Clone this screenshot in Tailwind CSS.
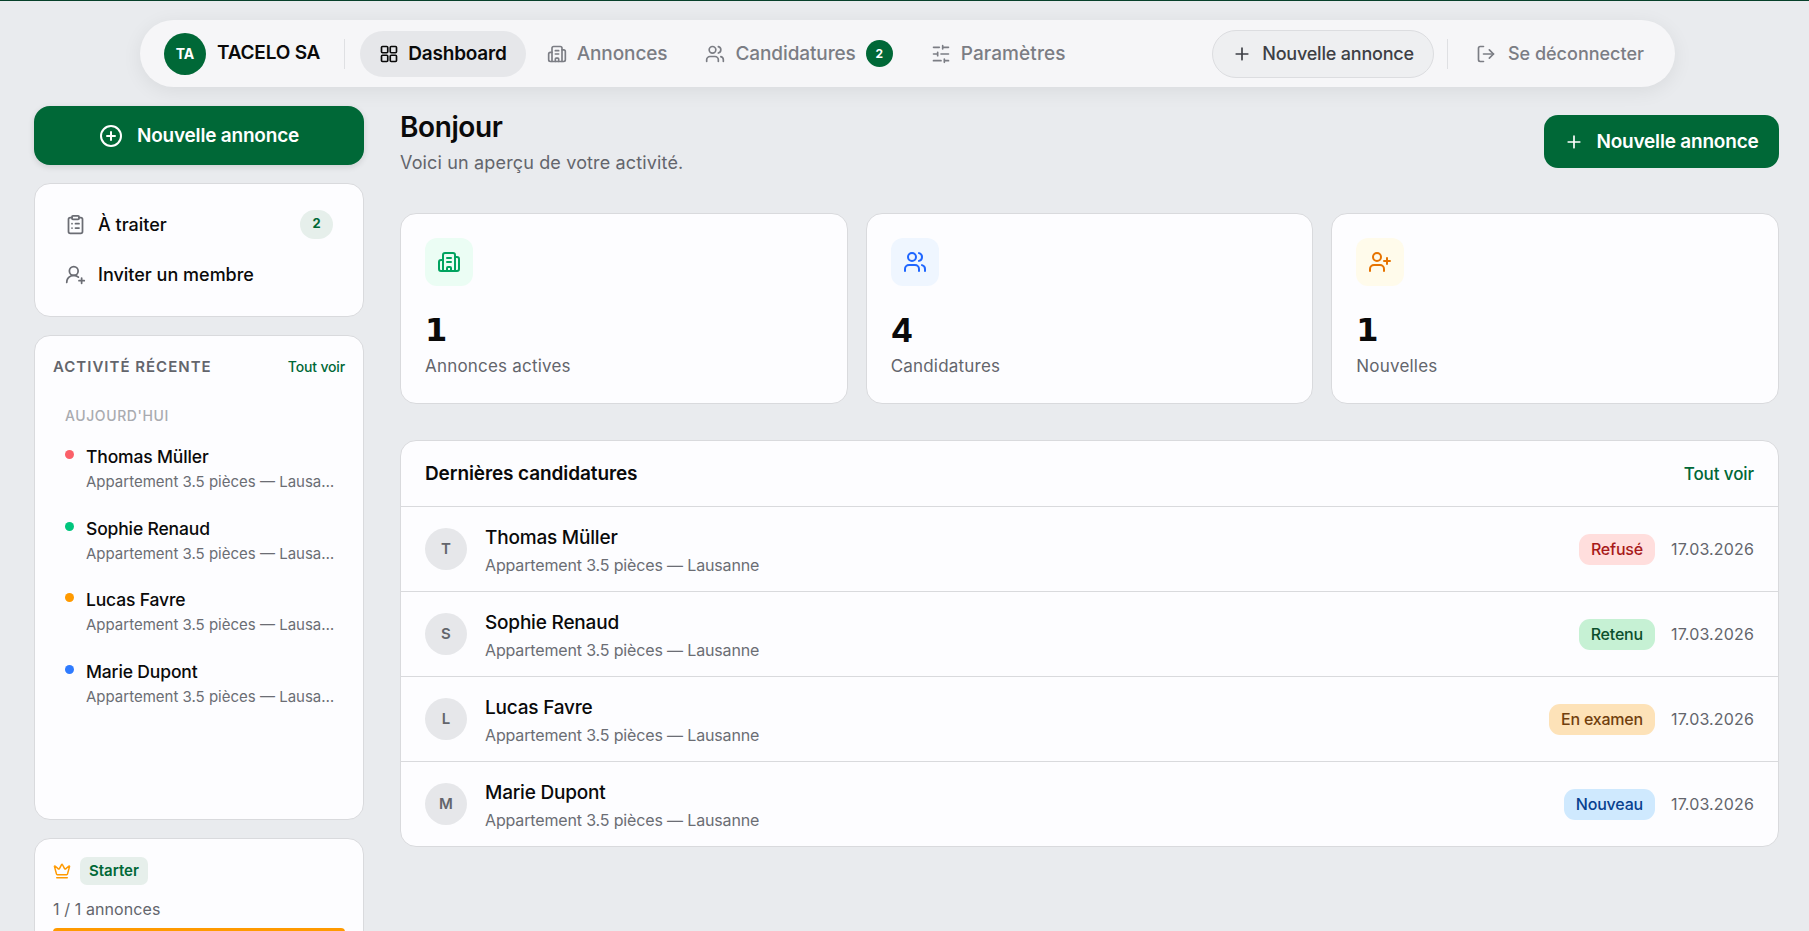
<!DOCTYPE html>
<html lang="fr">
<head>
    <meta charset="UTF-8">
    <meta name="viewport" content="width=device-width, initial-scale=1.0">
    <title>Dashboard</title>
    <script src="https://cdn.jsdelivr.net/npm/@tailwindcss/browser@4"></script>
</head>
<body class="bg-[#e9ebee] font-['Inter',sans-serif] text-[#0a0a0a] h-[931px] overflow-hidden border-t border-[#06402a]">

    <!-- Top nav -->
    <div class="flex justify-center pt-[19px] pl-[6px]">
        <nav class="w-[1535px] h-[67px] flex items-center rounded-[34px] bg-[#f6f6f8] shadow-[0_4px_20px_rgba(0,0,0,0.07)] pl-6 pr-5">
            <div class="w-[42px] h-[42px] rounded-full bg-[#006837] text-white flex items-center justify-center text-[14px] font-bold">TA</div>
            <span class="ml-[11px] text-[19px] font-semibold tracking-[-0.2px] whitespace-nowrap">TACELO SA</span>
            <div class="w-px h-[30px] bg-[#dfe0e3] ml-[24px] mr-[15px]"></div>
            <a class="flex items-center gap-[9px] h-[46px] px-[19px] rounded-[23px] bg-[#e6e7ea] text-[19px] font-semibold tracking-[-0.2px]">
                <svg class="w-5 h-5" viewBox="0 0 24 24" fill="none" stroke="currentColor" stroke-width="2"><rect x="3" y="3" width="7.5" height="7.5" rx="1.2"/><rect x="13.5" y="3" width="7.5" height="7.5" rx="1.2"/><rect x="3" y="13.5" width="7.5" height="7.5" rx="1.2"/><rect x="13.5" y="13.5" width="7.5" height="7.5" rx="1.2"/></svg>
                <span class="pt-[2px]">Dashboard</span>
            </a>
            <a class="flex items-center gap-[10px] ml-[21px] text-[19px] font-medium text-[#7b7d84] tracking-[-0.1px]">
                <svg class="w-5 h-5" viewBox="0 0 24 24" fill="none" stroke="currentColor" stroke-width="2" stroke-linecap="round" stroke-linejoin="round"><path d="M10 12h4M10 8h4"/><path d="M14 21v-3a1 1 0 0 0-1-1h-2a1 1 0 0 0-1 1v3"/><path d="M6 10H4a2 2 0 0 0-2 2v7a2 2 0 0 0 2 2h16a2 2 0 0 0 2-2V9a2 2 0 0 0-2-2h-2"/><path d="M6 21V5a2 2 0 0 1 2-2h8a2 2 0 0 1 2 2v16"/></svg>
                <span class="pt-[2px]">Annonces</span>
            </a>
            <a class="flex items-center gap-[10px] ml-[38px] text-[19px] font-medium text-[#7b7d84] tracking-[-0.1px]">
                <svg class="w-5 h-5" viewBox="0 0 24 24" fill="none" stroke="currentColor" stroke-width="2" stroke-linecap="round" stroke-linejoin="round"><path d="M16 21v-2a4 4 0 0 0-4-4H6a4 4 0 0 0-4 4v2"/><circle cx="9" cy="7" r="4"/><path d="M22 21v-2a4 4 0 0 0-3-3.87"/><path d="M16 3.13a4 4 0 0 1 0 7.75"/></svg>
                <span class="pt-[2px]">Candidatures</span>
                <span class="w-[27px] h-[27px] rounded-full bg-[#006837] text-white text-[12px] font-bold flex items-center justify-center">2</span>
            </a>
            <a class="flex items-center gap-[10px] ml-[38px] text-[19px] font-medium text-[#7b7d84] tracking-[0.1px]">
                <svg class="w-5 h-5" viewBox="0 0 24 24" fill="none" stroke="currentColor" stroke-width="2" stroke-linecap="round" stroke-linejoin="round"><path d="M21 4h-7M10 4H3M21 12h-9M8 12H3M21 20h-5M12 20H3M14 2v4M8 10v4M16 18v4"/></svg>
                <span class="pt-[2px]">Paramètres</span>
            </a>
            <a class="flex items-center gap-[10px] ml-auto h-[48px] px-[19px] rounded-[25px] bg-[#eeeff1] border border-[#dcdde0] text-[18px] font-medium text-[#3d3f45] tracking-[-0.2px]">
                <svg class="w-5 h-5" viewBox="0 0 24 24" fill="none" stroke="currentColor" stroke-width="2" stroke-linecap="round"><path d="M5 12h14M12 5v14"/></svg>
                Nouvelle annonce
            </a>
            <div class="w-px h-[30px] bg-[#dfe0e3] ml-[13px] mr-[28px]"></div>
            <a class="flex items-center gap-[12px] text-[18px] font-medium text-[#7b7d84] mr-[11px]">
                <svg class="w-5 h-5" viewBox="0 0 24 24" fill="none" stroke="currentColor" stroke-width="2" stroke-linecap="round" stroke-linejoin="round"><path d="M9 21H5a2 2 0 0 1-2-2V5a2 2 0 0 1 2-2h4"/><path d="m16 17 5-5-5-5"/><path d="M21 12H9"/></svg>
                Se déconnecter
            </a>
        </nav>
    </div>

    <div class="flex gap-[36px] pl-[34px] pr-[30px] pt-[19px]">

        <!-- Sidebar -->
        <aside class="w-[330px] shrink-0 flex flex-col">
            <button class="h-[59px] rounded-[16px] bg-[#006837] text-white flex items-center justify-center gap-[14px] text-[19px] font-semibold tracking-[-0.2px] shadow-[0_2px_6px_rgba(0,0,0,0.12)]">
                <svg class="w-6 h-6" viewBox="0 0 24 24" fill="none" stroke="currentColor" stroke-width="2" stroke-linecap="round"><circle cx="12" cy="12" r="10"/><path d="M8 12h8M12 8v8"/></svg>
                <span class="pt-[2px]">Nouvelle annonce</span>
            </button>

            <div class="mt-[18px] h-[134px] rounded-[16px] bg-[#fdfdff] border border-[#d9dadd] px-[30px] pt-[25px] flex flex-col gap-[20px]">
                <div class="flex items-center h-[30px]">
                    <svg class="w-[21px] h-[21px] text-[#6b6d74]" viewBox="0 0 24 24" fill="none" stroke="currentColor" stroke-width="2" stroke-linecap="round" stroke-linejoin="round"><rect x="8" y="2" width="8" height="4" rx="1"/><path d="M16 4h2a2 2 0 0 1 2 2v14a2 2 0 0 1-2 2H6a2 2 0 0 1-2-2V6a2 2 0 0 1 2-2h2"/><path d="M12 11h4M12 16h4M8 11h.01M8 16h.01"/></svg>
                    <span class="ml-[12px] text-[18px] font-medium">À traiter</span>
                    <span class="ml-auto w-[33px] h-[29px] rounded-full bg-[#e6efeb] text-[#006837] text-[13px] font-bold flex items-center justify-center">2</span>
                </div>
                <div class="flex items-center h-[30px]">
                    <svg class="w-[21px] h-[21px] text-[#6b6d74]" viewBox="0 0 24 24" fill="none" stroke="currentColor" stroke-width="2" stroke-linecap="round" stroke-linejoin="round"><path d="M2 21a8 8 0 0 1 13.3-6"/><circle cx="10" cy="8" r="5"/><path d="M19 16v6M22 19h-6"/></svg>
                    <span class="ml-[12px] text-[18px] font-medium">Inviter un membre</span>
                </div>
            </div>

            <div class="mt-[18px] h-[485px] rounded-[16px] bg-[#fdfdff] border border-[#d9dadd] px-[18px] pt-[21px]">
                <div class="flex items-center justify-between leading-[20px]">
                    <span class="text-[15px] font-semibold text-[#63656c] tracking-[1px] uppercase">Activité récente</span>
                    <a class="text-[14px] font-medium text-[#006837] tracking-[-0.15px]">Tout voir</a>
                </div>
                <div class="mt-[29px] ml-[12px] text-[14px] leading-[20px] font-medium text-[#a9abb0] tracking-[0.6px] uppercase">Aujourd'hui</div>
                <div class="mt-[21px] flex flex-col gap-[26.6px]">
                    <div class="flex items-start">
                        <span class="w-[9px] h-[9px] rounded-full bg-[#fb6069] ml-[12px] mt-[3px] shrink-0"></span>
                        <div class="ml-[12px] min-w-0 w-[250px]">
                            <div class="text-[17.5px] font-medium leading-[20px] tracking-[-0.15px]">Thomas Müller</div>
                            <div class="text-[15px] text-[#6b6d74] leading-[20px] mt-[5px] truncate">Appartement 3.5 pièces — Lausanne</div>
                        </div>
                    </div>
                    <div class="flex items-start">
                        <span class="w-[9px] h-[9px] rounded-full bg-[#00c57d] ml-[12px] mt-[3px] shrink-0"></span>
                        <div class="ml-[12px] min-w-0 w-[250px]">
                            <div class="text-[17.5px] font-medium leading-[20px] tracking-[-0.15px]">Sophie Renaud</div>
                            <div class="text-[15px] text-[#6b6d74] leading-[20px] mt-[5px] truncate">Appartement 3.5 pièces — Lausanne</div>
                        </div>
                    </div>
                    <div class="flex items-start">
                        <span class="w-[9px] h-[9px] rounded-full bg-[#ff9a00] ml-[12px] mt-[3px] shrink-0"></span>
                        <div class="ml-[12px] min-w-0 w-[250px]">
                            <div class="text-[17.5px] font-medium leading-[20px] tracking-[-0.15px]">Lucas Favre</div>
                            <div class="text-[15px] text-[#6b6d74] leading-[20px] mt-[5px] truncate">Appartement 3.5 pièces — Lausanne</div>
                        </div>
                    </div>
                    <div class="flex items-start">
                        <span class="w-[9px] h-[9px] rounded-full bg-[#2f7bff] ml-[12px] mt-[3px] shrink-0"></span>
                        <div class="ml-[12px] min-w-0 w-[250px]">
                            <div class="text-[17.5px] font-medium leading-[20px] tracking-[-0.15px]">Marie Dupont</div>
                            <div class="text-[15px] text-[#6b6d74] leading-[20px] mt-[5px] truncate">Appartement 3.5 pièces — Lausanne</div>
                        </div>
                    </div>
                </div>
            </div>

            <div class="mt-[18px] h-[140px] rounded-[16px] bg-[#fdfdff] border border-[#d9dadd] px-[18px] pt-[18px]">
                <div class="flex items-center gap-[9px]">
                    <svg class="w-[18px] h-[18px] text-[#ff9a00]" viewBox="0 0 24 24" fill="none" stroke="currentColor" stroke-width="2" stroke-linecap="round" stroke-linejoin="round"><path d="M11.6 3.3a.5.5 0 0 1 .9 0l2.9 5.6a1 1 0 0 0 1.5.3l4.4-3.8a.5.5 0 0 1 .8.5l-2.8 10.3a1 1 0 0 1-1 .7H5.7a1 1 0 0 1-1-.7L1.9 5.9a.5.5 0 0 1 .8-.5l4.4 3.8a1 1 0 0 0 1.5-.3z"/><path d="M5 21h14"/></svg>
                    <span class="h-[28px] px-[9px] rounded-[7px] bg-[#e6efeb] text-[#006837] text-[15px] font-semibold flex items-center">Starter</span>
                </div>
                <div class="mt-[14px] text-[16px] text-[#63656c] leading-[20px] tracking-[0.1px]">1 / 1 annonces</div>
                <div class="mt-[9px] h-[8px] rounded-full bg-[#ff9a00]"></div>
            </div>
        </aside>

        <!-- Main -->
        <main class="flex-1 min-w-0">
            <div class="flex items-start justify-between h-[107px]">
                <div>
                    <h1 class="text-[28px] font-semibold leading-[36px] tracking-[-0.4px] mt-[3px]">Bonjour</h1>
                    <p class="text-[18px] text-[#63656c] leading-[24px] mt-[6px] tracking-[0.15px]">Voici un aperçu de votre activité.</p>
                </div>
                <button class="mt-[9px] h-[53px] w-[235px] rounded-[14px] bg-[#006837] text-white flex items-center justify-center gap-[12px] text-[19px] font-semibold tracking-[-0.2px]">
                    <svg class="w-5 h-5" viewBox="0 0 24 24" fill="none" stroke="currentColor" stroke-width="2" stroke-linecap="round"><path d="M5 12h14M12 5v14"/></svg>
                    <span class="pt-[2px]">Nouvelle annonce</span>
                </button>
            </div>

            <!-- Stats -->
            <div class="grid grid-cols-3 gap-[18px]">
                <div class="h-[191px] rounded-[16px] bg-[#fdfdff] border border-[#d9dadd] px-6 pt-6">
                    <div class="w-[48px] h-[48px] rounded-[12px] bg-[#ebfdf4] text-[#00a35f] flex items-center justify-center">
                        <svg class="w-6 h-6" viewBox="0 0 24 24" fill="none" stroke="currentColor" stroke-width="2" stroke-linecap="round" stroke-linejoin="round"><path d="M10 12h4M10 8h4"/><path d="M14 21v-3a1 1 0 0 0-1-1h-2a1 1 0 0 0-1 1v3"/><path d="M6 10H4a2 2 0 0 0-2 2v7a2 2 0 0 0 2 2h16a2 2 0 0 0 2-2V9a2 2 0 0 0-2-2h-2"/><path d="M6 21V5a2 2 0 0 1 2-2h8a2 2 0 0 1 2 2v16"/></svg>
                    </div>
                    <div class="mt-[24px] font-['DejaVu_Sans',sans-serif] text-[32px] font-bold leading-[40px]">1</div>
                    <div class="mt-[4px] text-[17px] text-[#63656c] leading-[24px] tracking-[0.2px]">Annonces actives</div>
                </div>
                <div class="h-[191px] rounded-[16px] bg-[#fdfdff] border border-[#d9dadd] px-6 pt-6">
                    <div class="w-[48px] h-[48px] rounded-[12px] bg-[#eff6ff] text-[#1f66ff] flex items-center justify-center">
                        <svg class="w-6 h-6" viewBox="0 0 24 24" fill="none" stroke="currentColor" stroke-width="2" stroke-linecap="round" stroke-linejoin="round"><path d="M16 21v-2a4 4 0 0 0-4-4H6a4 4 0 0 0-4 4v2"/><circle cx="9" cy="7" r="4"/><path d="M22 21v-2a4 4 0 0 0-3-3.87"/><path d="M16 3.13a4 4 0 0 1 0 7.75"/></svg>
                    </div>
                    <div class="mt-[24px] text-[33px] font-bold leading-[40px]">4</div>
                    <div class="mt-[4px] text-[17px] text-[#63656c] leading-[24px] tracking-[0.2px]">Candidatures</div>
                </div>
                <div class="h-[191px] rounded-[16px] bg-[#fdfdff] border border-[#d9dadd] px-6 pt-6">
                    <div class="w-[48px] h-[48px] rounded-[12px] bg-[#fffbeb] text-[#e67300] flex items-center justify-center">
                        <svg class="w-6 h-6" viewBox="0 0 24 24" fill="none" stroke="currentColor" stroke-width="2" stroke-linecap="round" stroke-linejoin="round"><path d="M16 21v-2a4 4 0 0 0-4-4H6a4 4 0 0 0-4 4v2"/><circle cx="9" cy="7" r="4"/><path d="M19 8v6M22 11h-6"/></svg>
                    </div>
                    <div class="mt-[24px] font-['DejaVu_Sans',sans-serif] text-[32px] font-bold leading-[40px]">1</div>
                    <div class="mt-[4px] text-[17px] text-[#63656c] leading-[24px] tracking-[0.2px]">Nouvelles</div>
                </div>
            </div>

            <!-- Latest applications -->
            <div class="mt-[36px] rounded-[16px] bg-[#fdfdff] border border-[#d9dadd] overflow-hidden">
                <div class="h-[66px] flex items-center justify-between px-6 pt-[2px] border-b border-[#d9dadd]">
                    <h2 class="text-[19px] font-semibold tracking-[-0.1px]">Dernières candidatures</h2>
                    <a class="text-[17px] font-medium text-[#006837] tracking-[-0.1px]">Tout voir</a>
                </div>
                <div class="h-[85px] flex items-center px-6 border-b border-[#d9dadd]">
                    <div class="w-[42px] h-[42px] rounded-full bg-[#e6e7ea] text-[#63656c] flex items-center justify-center text-[15px] font-semibold">T</div>
                    <div class="ml-[18px] pt-[2px]">
                        <div class="text-[19px] font-medium leading-[24px] tracking-[-0.2px]">Thomas Müller</div>
                        <div class="text-[16px] text-[#6b6d74] leading-[20px] mt-[5px] tracking-[-0.15px]">Appartement 3.5 pièces — Lausanne</div>
                    </div>
                    <span class="ml-auto h-[31px] px-[12px] rounded-[11px] bg-[#ffdedd] text-[#a81a1a] text-[16px] font-medium flex items-center tracking-[-0.2px]">Refusé</span>
                    <span class="ml-[16px] text-[16px] text-[#63656c] tracking-[0.15px]">17.03.2026</span>
                </div>
                <div class="h-[85px] flex items-center px-6 border-b border-[#d9dadd]">
                    <div class="w-[42px] h-[42px] rounded-full bg-[#e6e7ea] text-[#63656c] flex items-center justify-center text-[15px] font-semibold">S</div>
                    <div class="ml-[18px] pt-[2px]">
                        <div class="text-[19px] font-medium leading-[24px] tracking-[-0.2px]">Sophie Renaud</div>
                        <div class="text-[16px] text-[#6b6d74] leading-[20px] mt-[5px] tracking-[-0.15px]">Appartement 3.5 pièces — Lausanne</div>
                    </div>
                    <span class="ml-auto h-[31px] px-[12px] rounded-[11px] bg-[#c6f1d4] text-[#0c4f2c] text-[16px] font-medium flex items-center tracking-[-0.2px]">Retenu</span>
                    <span class="ml-[16px] text-[16px] text-[#63656c] tracking-[0.15px]">17.03.2026</span>
                </div>
                <div class="h-[85px] flex items-center px-6 border-b border-[#d9dadd]">
                    <div class="w-[42px] h-[42px] rounded-full bg-[#e6e7ea] text-[#63656c] flex items-center justify-center text-[15px] font-semibold">L</div>
                    <div class="ml-[18px] pt-[2px]">
                        <div class="text-[19px] font-medium leading-[24px] tracking-[-0.2px]">Lucas Favre</div>
                        <div class="text-[16px] text-[#6b6d74] leading-[20px] mt-[5px] tracking-[-0.15px]">Appartement 3.5 pièces — Lausanne</div>
                    </div>
                    <span class="ml-auto h-[31px] px-[12px] rounded-[11px] bg-[#fde2b8] text-[#713f0e] text-[16px] font-medium flex items-center tracking-[-0.2px]">En examen</span>
                    <span class="ml-[16px] text-[16px] text-[#63656c] tracking-[0.15px]">17.03.2026</span>
                </div>
                <div class="h-[84px] flex items-center px-6">
                    <div class="w-[42px] h-[42px] rounded-full bg-[#e6e7ea] text-[#63656c] flex items-center justify-center text-[15px] font-semibold">M</div>
                    <div class="ml-[18px] pt-[2px]">
                        <div class="text-[19px] font-medium leading-[24px] tracking-[-0.2px]">Marie Dupont</div>
                        <div class="text-[16px] text-[#6b6d74] leading-[20px] mt-[5px] tracking-[-0.15px]">Appartement 3.5 pièces — Lausanne</div>
                    </div>
                    <span class="ml-auto h-[31px] px-[12px] rounded-[11px] bg-[#cfe9fe] text-[#08418f] text-[16px] font-medium flex items-center tracking-[-0.2px]">Nouveau</span>
                    <span class="ml-[16px] text-[16px] text-[#63656c] tracking-[0.15px]">17.03.2026</span>
                </div>
            </div>
        </main>
    </div>

</body>
</html>
